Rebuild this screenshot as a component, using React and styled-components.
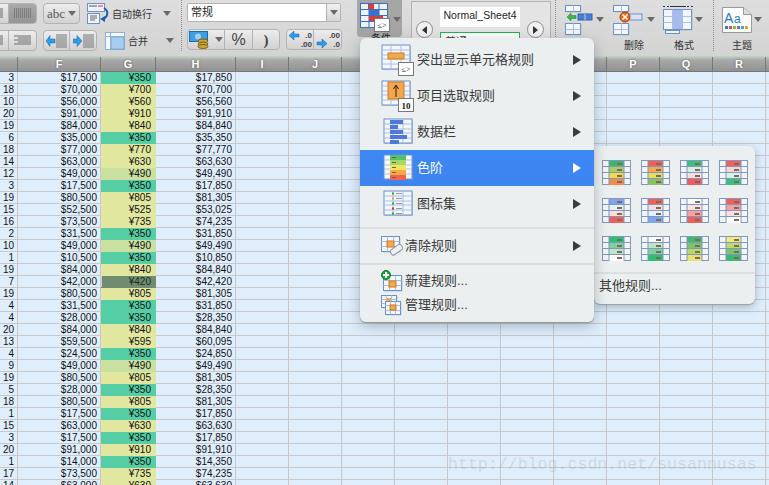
import React from 'react';
import styled, { createGlobalStyle } from 'styled-components';

const Global = createGlobalStyle`
    html, body { margin: 0; padding: 0; background: #dfeefd; overflow: hidden; }
    * { box-sizing: border-box; }
`;

const CJK = `"Liberation Sans", "Noto Sans CJK SC", sans-serif`;

const Page = styled.div`
    position: relative;
    width: 769px;
    height: 485px;
    overflow: hidden;
    font-family: ${CJK};
    background: #dfeefd;
`;

/* ---------- ribbon ---------- */
const Ribbon = styled.div`
    display: flex;
    height: 57px;
    overflow: hidden;
    background: linear-gradient(#dedede, #d3d3d3);
    border-bottom: 1px solid #b9d6ba;
`;
const Dotted = styled.div`
    width: 1px;
    flex: none;
    margin: 0 0 5px;
    border-left: 1px dotted #8d8d8d;
`;
const AlignGroup = styled.div`
    flex: none;
    width: 201px;
    margin-left: -20px;
    display: flex;
    flex-direction: column;
    gap: 6px;
    padding-top: 3px;
`;
const ToolRow = styled.div`
    display: flex;
    align-items: center;
    height: 21px;
`;
const Seg = styled.div`
    display: flex;
    flex: none;
    height: 21px;
    margin-left: ${p => p.$ml || 0}px;
    border: 1px solid #b3b3b3;
    border-radius: 4px;
    overflow: hidden;
    background: linear-gradient(#ededed, #d2d2d2);
`;
const SegBtn = styled.div`
    flex: none;
    width: ${p => p.$w}px;
    display: flex;
    align-items: center;
    justify-content: ${p => p.$justify || 'center'};
    gap: 3px;
    border-right: 1px solid #b3b3b3;
    background: ${p => p.$on ? 'linear-gradient(#a9a9a9, #969696)' : 'none'};
    color: #444;
    &:last-child { border-right: 0; }
`;
const Abc = styled.span`
    font: 13px "Liberation Serif", serif;
    color: #555;
`;
const Caret = styled.i`
    display: block;
    flex: none;
    margin-left: ${p => p.$ml || 0}px;
    margin-top: ${p => p.$mt || 0}px;
    width: 0;
    height: 0;
    border-left: 4px solid transparent;
    border-right: 4px solid transparent;
    border-top: 5px solid #6a6a6a;
`;
const ToolIcon = styled.div`
    display: flex;
    flex: none;
    margin-left: ${p => p.$ml || 0}px;
`;
const ToolLabel = styled.span`
    font-size: 10px;
    color: #333;
    white-space: nowrap;
    margin-left: ${p => p.$ml || 0}px;
`;
const NumberGroup = styled.div`
    width: 175px;
    flex: none;
    display: flex;
    flex-direction: column;
    gap: 7px;
    padding: 3px 0 0 5px;
`;
const Combo = styled.div`
    width: 154px;
    height: 19px;
    display: flex;
    background: #fff;
    border: 1px solid #b3b3b3;
    border-radius: 2px;
    font-size: 11px;
    color: #222;
`;
const ComboText = styled.div`
    flex: 1;
    padding-left: 3px;
    line-height: 17px;
`;
const ComboArrow = styled.div`
    width: 14px;
    display: flex;
    align-items: center;
    justify-content: center;
    border-left: 1px solid #b3b3b3;
    background: linear-gradient(#f0f0f0, #d6d6d6);
`;
const Percent = styled.span`
    font: 16px "Liberation Sans", sans-serif;
    color: #444;
`;
const Comma = styled.span`
    font: bold 15px "Liberation Serif", serif;
    color: #444;
    line-height: 14px;
`;
const CondBtn = styled.div`
    width: 45px;
    height: 37px;
    flex: none;
    display: flex;
    align-items: flex-start;
    gap: 3px;
    padding: 3px 0 0 3px;
    background: #a5a5a5;
    border-radius: 0 0 4px 4px;
`;
const CondLabel = styled.div`
    position: absolute;
    left: 371px;
    top: 30px;
    font-size: 10px;
    color: #222;
`;
const StylePanel = styled.div`
    width: 140px;
    flex: none;
    margin: 1px 4px 0 9px;
    padding: 5px 4px 0;
    display: flex;
    gap: 7px;
    background: #e4e4e4;
    border: 1px solid #b3b3b3;
`;
const RoundBtn = styled.div`
    width: 17px;
    height: 17px;
    flex: none;
    margin-top: 14px;
    display: flex;
    align-items: center;
    justify-content: center;
    background: #f2f2f2;
    border: 1px solid #8c8c8c;
    border-radius: 50%;
`;
const Tri = styled.i`
    width: 0;
    height: 0;
    border-top: 4px solid transparent;
    border-bottom: 4px solid transparent;
    ${p => p.$dir === 'left' ? 'border-right: 5px solid #333;' : 'border-left: 5px solid #333;'}
`;
const StyleCol = styled.div`
    width: 80px;
    display: flex;
    flex-direction: column;
    gap: 5px;
`;
const StyleName = styled.div`
    height: 20px;
    background: #fff;
    font-size: 10.500px;
    line-height: 17px;
    text-align: center;
    color: #222;
`;
const StyleCell = styled.div`
    height: 24px;
    background: #fff;
    border: 1px solid #1fb457;
    font-size: 11px;
    padding-left: 4px;
    color: #333;
`;
const CellTools = styled.div`
    width: 157px;
    flex: none;
    display: flex;
    padding: 5px 0 0 9px;
`;
const CellTool = styled.div`
    width: ${p => p.$w || 50}px;
    display: flex;
    flex-direction: column;
    align-items: flex-start;
`;
const IconLine = styled.div`
    height: 34px;
    display: flex;
    align-items: flex-start;
    gap: 2px;
`;
const GroupLabel = styled.span`
    font-size: 10px;
    line-height: 13px;
    color: #333;
    margin-left: ${p => p.$ml || 0}px;
`;
const ThemeTool = styled.div`
    flex: none;
    display: flex;
    flex-direction: column;
    align-items: flex-start;
    padding: 5px 0 0 8px;
`;

/* ---------- sheet ---------- */
const COLS = '18px 83px 55px 80px repeat(10, 53px) 54px 20px';

const HeadRow = styled.div`
    display: grid;
    grid-template-columns: ${COLS};
    height: 15px;
    background: linear-gradient(#c6c6c6, #a9a9a9 20%, #8f8f8f);
`;
const HeadCell = styled.div`
    border-right: 1px solid #767676;
    border-bottom: 1px solid #777;
    font: bold 11px/14px "Liberation Sans", sans-serif;
    color: #fff;
    text-align: center;
    text-shadow: 0 0 2px #555;
`;
const Row = styled.div`
    display: grid;
    grid-template-columns: ${COLS};
    height: 12px;
`;
const Cell = styled.div`
    border-right: 1px solid #c9c7c9;
    border-bottom: 1px solid #c9c7c9;
    padding-right: ${p => p.$pad || 3}px;
    font: 10px/11px "Liberation Sans", sans-serif;
    color: #111;
    text-align: right;
    overflow: hidden;
`;
const FillCell = styled(Cell)`
    background: ${p => p.$fill};
    border-color: ${p => p.$fill};
    color: ${p => p.$fill === '#6f8c70' ? '#1b2a1b' : '#111'};
    ${p => p.$fill === '#6f8c70' ? 'box-shadow: inset 1px 0 0 #cfd3cf;' : ''}
`;

const Watermark = styled.div`
    position: absolute;
    left: 448px;
    top: 455px;
    font: 16.600px "Liberation Mono", monospace;
    color: rgba(130, 130, 130, 0.22);
    white-space: nowrap;
`;

/* ---------- menus ---------- */
const Menu = styled.div`
    position: absolute;
    left: 360px;
    top: 38px;
    width: 234px;
    height: 284px;
    padding-top: 4px;
    background: #ebeff0;
    border-radius: 6px;
    box-shadow: 0 1px 1px #8f9799, 0 4px 14px rgba(60, 70, 80, 0.35);
    z-index: 2;
`;
const MenuItem = styled.div`
    height: ${p => p.$h || 36}px;
    display: flex;
    align-items: center;
    padding: 0 13px 0 21px;
    font-size: 13px;
    color: ${p => p.$active ? '#fff' : '#3a3a3a'};
    background: ${p => p.$active ? 'linear-gradient(#3b87f6, #3e84ef)' : 'none'};
`;
const IconSlot = styled.div`
    width: ${p => p.$w || 36}px;
    flex: none;
    display: flex;
    align-items: center;
    padding-left: ${p => p.$pl || 0}px;
`;
const MenuText = styled.span`
    flex: 1;
    white-space: nowrap;
    padding-bottom: ${p => p.$pb ?? 4}px;
`;
const Arrow = styled.i`
    width: 0;
    height: 0;
    border-top: 5px solid transparent;
    border-bottom: 5px solid transparent;
    border-left: 8px solid ${p => p.$active ? '#fff' : '#3c3c3c'};
`;
const Sep = styled.div`
    height: 2px;
    margin: ${p => p.$m || '0'};
    background: #dcdfe0;
`;
const SubMenu = styled.div`
    position: absolute;
    left: 594px;
    top: 146px;
    width: 161px;
    height: 158px;
    padding-top: 14px;
    background: #ebeff0;
    border-radius: 0 6px 6px 6px;
    box-shadow: 0 1px 1px #9aa2a4, 0 3px 10px rgba(60, 70, 80, 0.35);
    z-index: 1;
`;
const ScaleGrid = styled.div`
    display: grid;
    grid-template-columns: repeat(4, 29px);
    grid-auto-rows: 26px;
    column-gap: 10px;
    row-gap: 12px;
    padding-left: 8px;
`;
const SubText = styled.div`
    padding-left: 5px;
    font-size: 13px;
    line-height: 24px;
    color: #3a3a3a;
`;

/* ---------- drawings ---------- */
const Lines = ({ w = 17, n = 5, color = '#6d6d6d', dotted }) => (
  <svg width={w} height={n * 2 + 1}>
    {Array.from({ length: n }, (_, i) => (
      <line key={i} x1={i % 2 && !dotted ? 4 : 0} x2={w} y1={i * 2 + 1} y2={i * 2 + 1} stroke={color} strokeDasharray={dotted ? '1 1' : undefined} />
    ))}
  </svg>
);

const Indent = ({ flip }) => (
  <svg width="21" height="14">
    <path d={flip ? 'M0 5h4V1.500L9 7l-5 5.500V9H0z' : 'M0 7l4-5.500V5h5v4H4v3.500z'} fill="#2d9be8" stroke="#1565a8" strokeWidth=".5" />
    {[1, 3, 5, 7, 9, 11, 13].map(y => <line key={y} x1="10" x2="21" y1={y} y2={y} stroke="#777" />)}
  </svg>
);

const WrapIcon = () => (
  <svg width="22" height="21" viewBox="0 0 22 21">
    <rect x=".5" y=".5" width="17" height="8" fill="#eef3fb" stroke="#6f90c4" />
    <line x1="2" x2="10" y1="3" y2="3" stroke="#555" />
    <line x1="11" x2="16" y1="3" y2="3" stroke="#d33" />
    <rect x=".5" y="10.500" width="12" height="10" fill="#eef3fb" stroke="#6f90c4" />
    <path d="M3 13h7M3 15h7M3 17h5" stroke="#666" />
    <path d="M17 5c5 3 4 9-1 11" fill="none" stroke="#1d5fb0" strokeWidth="2" />
    <path d="M18 13l-5 3 5 3z" fill="#1d5fb0" />
  </svg>
);

const MergeIcon = () => (
  <svg width="20" height="18">
    <rect x=".5" y=".5" width="19" height="17" fill="#f5f8fc" stroke="#8fb0d8" />
    <rect x="6" y="5" width="13" height="12" fill="#a9cdf0" stroke="#7fa8d0" />
    <line x1="0" x2="19" y1="4.500" y2="4.500" stroke="#8fb0d8" />
    <line x1="5.500" x2="5.500" y1="0" y2="17" stroke="#8fb0d8" />
  </svg>
);

const CurrencyIcon = () => (
  <svg width="20" height="18">
    <rect x=".5" y=".5" width="18" height="10" fill="#3f9fe0" stroke="#1a6cae" />
    <circle cx="9" cy="5.500" r="3" fill="#9fd3f5" />
    <ellipse cx="14" cy="10" rx="5" ry="2" fill="#c9a53b" stroke="#7c6216" />
    <ellipse cx="14" cy="13" rx="5" ry="2" fill="#c9a53b" stroke="#7c6216" />
    <ellipse cx="14" cy="15.500" rx="5" ry="2" fill="#c9a53b" stroke="#7c6216" />
  </svg>
);

const DecimalIcon = ({ more }) => (
  <svg width="24" height="17">
    <path d={more ? 'M1 11h5V8l5 4.500L6 17v-3H1z' : 'M1 4.500L6 0v3h5v3H6v3z'} fill="#2d9be8" stroke="#1565a8" strokeWidth=".5" />
    <text x="24" y="7" textAnchor="end" fontSize="8" fontWeight="bold" fill="#444" fontFamily="Liberation Sans">{more ? '.00' : '.0'}</text>
    <text x="24" y="16" textAnchor="end" fontSize="8" fontWeight="bold" fill="#444" fontFamily="Liberation Sans">{more ? '.0' : '.00'}</text>
  </svg>
);

// blue table used by most of the rule icons
const Table = ({ x = 1, y = 1, w = 28, h = 24, cols = 3, rows = 5, fill = '#f3f6fc' }) => (
  <g>
    <rect x={x + 1} y={y + 1} width={w} height={h} fill="#9aa" opacity=".5" />
    <rect x={x} y={y} width={w} height={h} fill={fill} stroke="#6b8fca" />
    {Array.from({ length: cols - 1 }, (_, i) => {
      const cx = x + Math.round((w * (i + 1)) / cols);
      return <line key={i} x1={cx} x2={cx} y1={y} y2={y + h} stroke="#a9bfe3" />;
    })}
    {Array.from({ length: rows - 1 }, (_, i) => {
      const cy = y + Math.round((h * (i + 1)) / rows);
      return <line key={i} x1={x} x2={x + w} y1={cy} y2={cy} stroke="#a9bfe3" />;
    })}
  </g>
);

const Badge = ({ children, bold }) => (
  <g>
    <rect x="17.500" y="18.500" width="15" height="13" fill="#fff" stroke="#777" />
    <text x="25" y={bold ? 29 : 28} textAnchor="middle" fontSize={bold ? 9 : 8} fontWeight={bold ? 'bold' : 'normal'} fontFamily="Liberation Serif" fill="#222">{children}</text>
  </g>
);

const HighlightIcon = () => (
  <svg width="34" height="33">
    <Table y={1} />
    <rect x="7" y="9" width="16" height="6" fill="#f0a84a" stroke="#c97f22" />
    <Badge>≤&gt;</Badge>
  </svg>
);

const TopIcon = () => (
  <svg width="34" height="33">
    <Table y={1} />
    <rect x="7" y="2" width="16" height="17" fill="#f3a64c" stroke="#c97f22" />
    <path d="M15 17V6M12.500 9L15 5l2.500 4" stroke="#222" fill="none" />
    <Badge bold>10</Badge>
  </svg>
);

const BarsIcon = () => (
  <svg width="30" height="28">
    <Table y={1} cols={3} />
    {[[1, 13], [6, 8], [11, 13], [16, 17], [21, 9]].map(([y, w], i) => (
      <rect key={i} x="7" y={y + 1} width={w} height="4" fill="#4f79d8" />
    ))}
  </svg>
);

const ScaleIcon = () => (
  <svg width="30" height="28">
    <Table y={1} fill="#f8fafd" />
    {['#56c06b', '#a6d66c', '#f8e45c', '#f7a94c', '#f4624e'].map((c, i) => (
      <rect key={c} x="7" y={1 + i * 5} width="16" height="5" fill={c} />
    ))}
    {[3, 8, 13, 18, 23].map(y => <line key={y} x1="9" x2="13" y1={y + .5} y2={y + .5} stroke="#665" />)}
  </svg>
);

const IconSetIcon = () => (
  <svg width="30" height="28">
    <Table y={1} />
    {['#1fae3c', '#f5a623', '#1fae3c', '#e3231c', '#1fae3c'].map((c, i) => (
      <g key={i}>
        <rect x="9" y={2.500 + i * 5} width="2" height="2" fill={c} />
        <line x1="13" x2="19" y1={3.500 + i * 5} y2={3.500 + i * 5} stroke="#999" />
      </g>
    ))}
  </svg>
);

const ClearIcon = () => (
  <svg width="22" height="20">
    <Table x={.5} y={.5} w={18} h={15} cols={3} rows={3} />
    <rect x="6" y="5" width="7" height="6" fill="#f3a64c" stroke="#c97f22" />
    <rect x="9" y="11" width="13" height="6" rx="2" transform="rotate(-35 15 14)" fill="#eef1f5" stroke="#8a93a0" />
  </svg>
);

const NewIcon = () => (
  <svg width="24" height="22">
    <Table x={2.500} y={5.500} w={18} h={15} cols={3} rows={3} />
    <rect x="8" y="11" width="7" height="6" fill="#f3a64c" stroke="#c97f22" />
    <circle cx="5" cy="5" r="4.500" fill="#17a63b" stroke="#0d7a27" />
    <path d="M5 2v6M2 5h6" stroke="#fff" strokeWidth="2" />
  </svg>
);

const ManageIcon = () => (
  <svg width="24" height="22">
    <Table x={.5} y={.5} w={15} h={12} cols={3} rows={3} />
    <rect x="5" y="3" width="5" height="4" fill="#f3a64c" />
    <Table x={4.500} y={6.500} w={15} h={13} cols={3} rows={3} />
    <rect x="9" y="10" width="6" height="5" fill="#f3a64c" stroke="#c97f22" />
  </svg>
);

const ScaleSwatch = ({ colors }) => (
  <svg width="29" height="26">
    <rect x=".5" y=".5" width="28" height="24" fill="#f3f4fa" stroke="#7f98bb" />
    {colors.map((c, i) => <rect key={i} x="7" y={1 + i * 6} width="15" height="6" fill={c} />)}
    <path d="M7 1v24M22 1v24M1 6.500h27M1 12.500h27M1 18.500h27" stroke="#7f98bb" fill="none" />
    {colors.map((_, i) => <rect key={i} x="15" y={3 + i * 6} width="5" height="2" fill="#7d6a58" />)}
  </svg>
);

const CondIcon = () => (
  <svg width="30" height="30">
    <rect x=".5" y=".5" width="27" height="24" fill="#eef3fb" stroke="#3d6fc0" />
    <rect x="8" y="1" width="6" height="5" fill="#e83a2a" />
    <rect x="9" y="7" width="10" height="5" fill="#3f6fd0" />
    <rect x="9" y="13" width="14" height="5" fill="#e83a2a" />
    <path d="M9 1v24M19 1v24M1 6.500h27M1 12.500h27M1 18.500h27" stroke="#3d6fc0" fill="none" />
    <rect x="14.500" y="15.500" width="15" height="13" fill="#fff" stroke="#777" />
    <text x="22" y="25" textAnchor="middle" fontSize="8" fontFamily="Liberation Serif" fill="#222">≤&gt;</text>
  </svg>
);

const InsertIcon = () => (
  <svg width="28" height="31">
    <Table x={.5} y={.5} w={15} h={6} cols={2} rows={1} />
    <Table x={.5} y={18.500} w={15} h={11} cols={2} rows={2} />
    <path d="M2 12l4-4v2.500h5v3H6V16z" fill="#3ab54a" stroke="#197a27" strokeWidth=".5" />
    <rect x="13" y="9" width="14" height="6" fill="#4a7fd8" stroke="#2f5fb0" />
    <line x1="20" x2="20" y1="9" y2="15" stroke="#bcd" />
  </svg>
);

const DeleteIcon = () => (
  <svg width="30" height="31">
    <Table x={.5} y={.5} w={15} h={6} cols={2} rows={1} />
    <Table x={.5} y={18.500} w={15} h={11} cols={2} rows={2} />
    <rect x="14" y="9" width="15" height="6" fill="#d9e4f6" stroke="#6b8fca" />
    <circle cx="12" cy="12" r="5" fill="#f06a1c" stroke="#a83c08" />
    <path d="M9.500 9.500l5 5M14.500 9.500l-5 5" stroke="#fff" strokeWidth="1.500" />
  </svg>
);

const FormatIcon = () => (
  <svg width="30" height="30">
    <path d="M0 1.500h30" stroke="#333" strokeDasharray="2 2" />
    <path d="M7 1.500h16" stroke="#333" />
    <Table x={.5} y={4.500} w={28} h={20} cols={3} rows={3} />
    <rect x="10" y="5" width="10" height="19" fill="#a7bcec" />
    <rect x="2.500" y="25.500" width="14" height="3" fill="#eef3fb" stroke="#6b8fca" />
  </svg>
);

const ThemeIcon = () => (
  <svg width="30" height="28">
    <path d="M.5 2.500h21l8 7v18H.5z" fill="#fbfbfb" stroke="#9a9a9a" />
    <path d="M21.500 2.500v7h8" fill="#ddd" stroke="#9a9a9a" />
    <text x="2" y="18" fontSize="14" fill="#2a78c8" fontFamily="Liberation Sans">A</text>
    <text x="12" y="18" fontSize="12" fill="#2a78c8" fontFamily="Liberation Sans">a</text>
    {['#3d7cc9', '#d9534f', '#8cba4b', '#8b66b3', '#3fb0c9', '#f39a2e'].map((c, i) => (
      <rect key={c} x={3 + i * 4} y="21" width="3" height="3" fill={c} />
    ))}
  </svg>
);

/* ---------- data ---------- */
const SCALES = [
  ['#3db56b', '#a8d060', '#f5d84a', '#f58a40'],
  ['#f0605a', '#f5a850', '#e8dc60', '#8cc060'],
  ['#3cbf7c', '#d5f0e0', '#fbdce0', '#f05a60'],
  ['#f0605a', '#fad4d4', '#d8f2e4', '#3cbf7c'],
  ['#7fa4ec', '#e4f0fc', '#fbdcd8', '#f0605a'],
  ['#f0605a', '#fbdcd8', '#e4f0fc', '#7fa4ec'],
  ['#ffffff', '#fce0e0', '#f8a0a0', '#f0605a'],
  ['#f0605a', '#f8a0a0', '#fce0e0', '#ffffff'],
  ['#2fbf70', '#7fd09a', '#bfe4c8', '#ffffff'],
  ['#ffffff', '#bfe4c8', '#7fd09a', '#2fbf70'],
  ['#3cb870', '#7cc468', '#b8d868', '#e8e070'],
  ['#f5e880', '#c0d870', '#80c468', '#3cb870'],
];

const ROWS = [
  [3, 17500, 350, 17850], [18, 70000, 700, 70700], [10, 56000, 560, 56560], [20, 91000, 910, 91910],
  [19, 84000, 840, 84840], [6, 35000, 350, 35350], [18, 77000, 770, 77770], [14, 63000, 630, 63630],
  [12, 49000, 490, 49490], [3, 17500, 350, 17850], [19, 80500, 805, 81305], [15, 52500, 525, 53025],
  [16, 73500, 735, 74235], [2, 31500, 350, 31850], [10, 49000, 490, 49490], [1, 10500, 350, 10850],
  [19, 84000, 840, 84840], [7, 42000, 420, 42420], [19, 80500, 805, 81305], [4, 31500, 350, 31850],
  [4, 28000, 350, 28350], [20, 84000, 840, 84840], [13, 59500, 595, 60095], [4, 24500, 350, 24850],
  [9, 49000, 490, 49490], [19, 80500, 805, 81305], [5, 28000, 350, 28350], [18, 80500, 805, 81305],
  [1, 17500, 350, 17850], [15, 63000, 630, 63630], [3, 17500, 350, 17850], [20, 91000, 910, 91910],
  [1, 14000, 350, 14350], [17, 73500, 735, 74235], [14, 63000, 630, 63630],
];

const LETTERS = ['', 'F', 'G', 'H', 'I', 'J', 'K', 'L', 'M', 'N', 'O', 'P', 'Q', 'R', '', ''];
const money = n => n.toLocaleString('en-US');

const fillFor = v => {
  if (v === 350) return '#55cda5';
  if (v === 420) return '#6f8c70';
  if (v === 490) return '#c9e0a0';
  return '#e2e79f';
};

const App = () => {
  return (
    <Page>
      <Global />
      <Ribbon>
        <AlignGroup>
          <ToolRow>
            <Seg>
              <SegBtn $w={28}><Lines /></SegBtn>
              <SegBtn $w={27} $on><Lines dotted color="#555" /></SegBtn>
            </Seg>
            <Seg $ml={6}><SegBtn $w={35}><Abc>abc</Abc><Caret /></SegBtn></Seg>
            <ToolIcon $ml={7}><WrapIcon /></ToolIcon>
            <ToolLabel $ml={3}>自动换行</ToolLabel>
            <Caret $ml={11} />
          </ToolRow>
          <ToolRow>
            <Seg>
              <SegBtn $w={28}><Lines /></SegBtn>
              <SegBtn $w={27}><Lines /></SegBtn>
            </Seg>
            <Seg $ml={6}>
              <SegBtn $w={26}><Indent /></SegBtn>
              <SegBtn $w={26}><Indent flip /></SegBtn>
            </Seg>
            <ToolIcon $ml={8}><MergeIcon /></ToolIcon>
            <ToolLabel $ml={3}>合并</ToolLabel>
            <Caret $ml={18} />
          </ToolRow>
        </AlignGroup>
        <Dotted />
        <NumberGroup>
          <Combo>
            <ComboText>常规</ComboText>
            <ComboArrow><Caret /></ComboArrow>
          </Combo>
          <ToolRow>
            <Seg>
              <SegBtn $w={37}><CurrencyIcon /><Caret $ml={3} /></SegBtn>
              <SegBtn $w={28}><Percent>%</Percent></SegBtn>
              <SegBtn $w={26}><Comma>)</Comma></SegBtn>
            </Seg>
            <Seg $ml={6}>
              <SegBtn $w={27}><DecimalIcon /></SegBtn>
              <SegBtn $w={27}><DecimalIcon more /></SegBtn>
            </Seg>
          </ToolRow>
        </NumberGroup>
        <CondBtn>
          <CondIcon />
          <Caret $mt={14} />
        </CondBtn>
        <StylePanel>
          <RoundBtn><Tri $dir="left" /></RoundBtn>
          <StyleCol>
            <StyleName>Normal_Sheet4</StyleName>
            <StyleCell>普通</StyleCell>
          </StyleCol>
          <RoundBtn><Tri $dir="right" /></RoundBtn>
        </StylePanel>
        <Dotted />
        <CellTools>
          <CellTool $w={48}>
            <IconLine><InsertIcon /><Caret $ml={1} $mt={12} /></IconLine>
            <GroupLabel $ml={8}>插入</GroupLabel>
          </CellTool>
          <CellTool>
            <IconLine><DeleteIcon /><Caret $ml={2} $mt={12} /></IconLine>
            <GroupLabel $ml={11}>删除</GroupLabel>
          </CellTool>
          <CellTool>
            <IconLine><FormatIcon /><Caret $mt={12} /></IconLine>
            <GroupLabel $ml={11}>格式</GroupLabel>
          </CellTool>
        </CellTools>
        <Dotted />
        <ThemeTool>
          <IconLine><ThemeIcon /><Caret $mt={12} /></IconLine>
          <GroupLabel $ml={10}>主题</GroupLabel>
        </ThemeTool>
      </Ribbon>
      <CondLabel>条件</CondLabel>

      <HeadRow>
        {LETTERS.map((l, i) => <HeadCell key={i}>{l}</HeadCell>)}
      </HeadRow>
      {ROWS.map(([qty, price, tax, total], i) => (
        <Row key={i}>
          <Cell>{qty}</Cell>
          <Cell>{'$' + money(price)}</Cell>
          <FillCell $fill={fillFor(tax)} $pad={4}>{'¥' + tax}</FillCell>
          <Cell>{'$' + money(total)}</Cell>
          {LETTERS.slice(4).map((_, j) => <Cell key={j} />)}
        </Row>
      ))}

      <Menu>
        <MenuItem>
          <IconSlot><HighlightIcon /></IconSlot>
          <MenuText>突出显示单元格规则</MenuText>
          <Arrow />
        </MenuItem>
        <MenuItem>
          <IconSlot><TopIcon /></IconSlot>
          <MenuText>项目选取规则</MenuText>
          <Arrow />
        </MenuItem>
        <MenuItem>
          <IconSlot $pl={2}><BarsIcon /></IconSlot>
          <MenuText>数据栏</MenuText>
          <Arrow />
        </MenuItem>
        <MenuItem $active>
          <IconSlot $pl={2}><ScaleIcon /></IconSlot>
          <MenuText>色阶</MenuText>
          <Arrow $active />
        </MenuItem>
        <MenuItem>
          <IconSlot $pl={2}><IconSetIcon /></IconSlot>
          <MenuText>图标集</MenuText>
          <Arrow />
        </MenuItem>
        <Sep $m="5px 0 0" />
        <MenuItem $h={34}>
          <IconSlot $w={24}><ClearIcon /></IconSlot>
          <MenuText>清除规则</MenuText>
          <Arrow />
        </MenuItem>
        <Sep $m="0 0 4px" />
        <MenuItem $h={24}>
          <IconSlot $w={24}><NewIcon /></IconSlot>
          <MenuText>新建规则...</MenuText>
        </MenuItem>
        <MenuItem $h={25}>
          <IconSlot $w={24}><ManageIcon /></IconSlot>
          <MenuText>管理规则...</MenuText>
        </MenuItem>
      </Menu>

      <SubMenu>
        <ScaleGrid>
          {SCALES.map((colors, i) => <ScaleSwatch key={i} colors={colors} />)}
        </ScaleGrid>
        <Sep $m="10px 0 0" />
        <SubText>其他规则...</SubText>
      </SubMenu>

      <Watermark>http://blog.csdn.net/susannusas</Watermark>
    </Page>
  );
};

export default App;
